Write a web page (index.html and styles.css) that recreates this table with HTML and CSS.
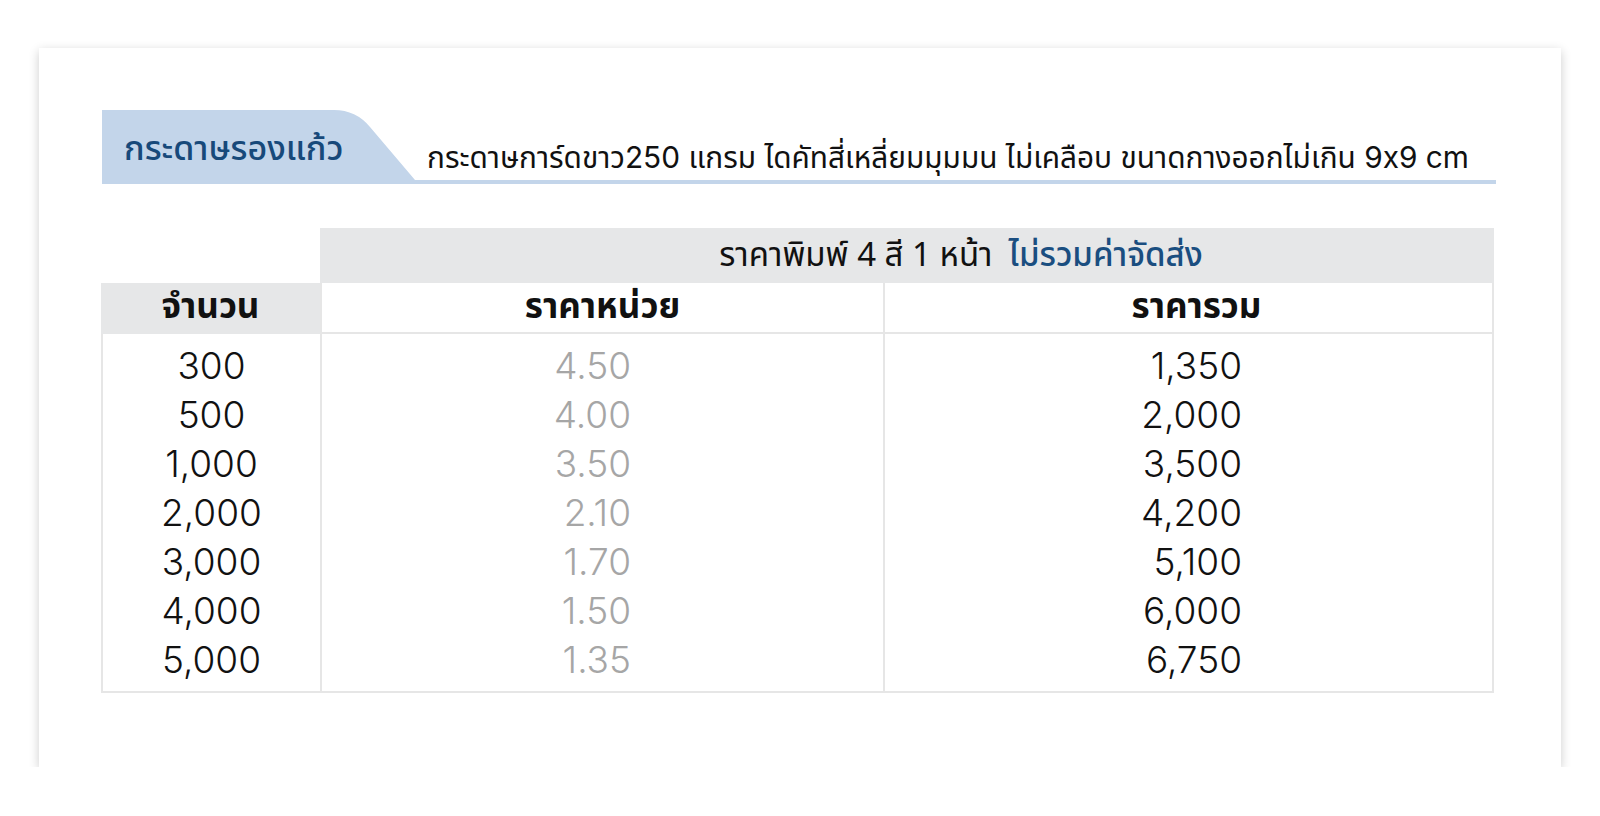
FILE: index.html
```html
<!DOCTYPE html>
<html lang="th">
<head>
<meta charset="utf-8">
<title>กระดาษรองแก้ว</title>
<link rel="stylesheet" href="styles.css">
</head>
<body>
<div class="card">
  <div class="heading">
    <div class="tab"><span class="tab-title">กระดาษรองแก้ว</span></div>
    <div class="desc">กระดาษการ์ดขาว250 แกรม ไดคัทสี่เหลี่ยมมุมมน ไม่เคลือบ ขนาดกางออกไม่เกิน 9x9 cm</div>
  </div>
  <div class="price-table">
    <div class="cell blank"></div>
    <div class="cell group">ราคาพิมพ์ 4 สี 1 หน้า <span class="note">ไม่รวมค่าจัดส่ง</span></div>
    <div class="cell head head-qty">จำนวน</div>
    <div class="cell head head-unit">ราคาหน่วย</div>
    <div class="cell head head-total">ราคารวม</div>
    <div class="col col-qty">
      <div class="v">300</div><div class="v">500</div><div class="v">1,000</div><div class="v">2,000</div><div class="v">3,000</div><div class="v">4,000</div><div class="v">5,000</div>
    </div>
    <div class="col col-unit">
      <div class="v">4.50</div><div class="v">4.00</div><div class="v">3.50</div><div class="v">2.10</div><div class="v">1.70</div><div class="v">1.50</div><div class="v">1.35</div>
    </div>
    <div class="col col-total">
      <div class="v">1,350</div><div class="v">2,000</div><div class="v">3,500</div><div class="v">4,200</div><div class="v">5,100</div><div class="v">6,000</div><div class="v">6,750</div>
    </div>
  </div>
</div>
</body>
</html>
```

FILE: styles.css
```css
html, body {
  margin: 0;
  padding: 0;
  background: #ffffff;
}
body {
  font-family: "Noto Sans Thai", "Noto Sans", "DejaVu Sans", sans-serif;
  color: #111111;
}
.card {
  margin: 48px 0 0 39px;
  width: 1522px;
  height: 719px;
  box-sizing: border-box;
  padding: 62px 65px 0 63px;
  background: #ffffff;
  box-shadow: 0 3px 10px rgba(0, 0, 0, 0.2);
}
.heading {
  display: flex;
  align-items: flex-end;
  border-bottom: 4px solid #c3d5ea;
  width: 1394px;
}
.tab {
  flex: 0 0 313px;
  height: 70px;
  background: #c3d5ea;
  clip-path: path('M0 0 H232 Q254 0 268 17 L313 70 H0 Z');
  display: flex;
  align-items: center;
  box-sizing: border-box;
  padding: 10px 0 0 22px;
}
.tab-title {
  font-size: 34px;
  color: #17497a;
  font-weight: 500;
  line-height: 1;
}
.desc {
  font-family: "Inter", "Noto Sans Thai", sans-serif;
  font-size: 29.8px;
  line-height: 1;
  padding: 0 0 7px 12px;
  white-space: nowrap;
}
.price-table {
  margin-top: 44px;
  margin-left: -1px;
  width: 1393px;
  display: grid;
  grid-template-columns: 219px 563px 611px;
}
.cell {
  display: flex;
  align-items: center;
  justify-content: center;
}
.group {
  grid-column: 2 / 4;
  height: 55px;
  background: #e6e7e8;
  font-size: 33px;
  padding-left: 108px;
}
.note {
  color: #1a4e80;
  margin-left: 16px;
  font-weight: 500;
}
.head {
  height: 49px;
  font-size: 35px;
  font-weight: 700;
  border-bottom: 2px solid #e6e6e6;
}
.head-qty {
  background: #e6e7e8;
  border-bottom-color: #e6e7e8;
}
.head-unit {
  border-left: 2px solid #e6e6e6;
}
.head-total {
  border-left: 2px solid #e6e6e6;
  border-right: 2px solid #e6e6e6;
  padding-left: 16px;
}
.col {
  padding: 7px 0;
  border-bottom: 2px solid #e6e6e6;
  font-family: "Inter", "Noto Sans", sans-serif;
  font-weight: 300;
  font-size: 37px;
}
.col-qty {
  border-left: 2px solid #e6e6e6;
  text-align: center;
}
.col-unit {
  border-left: 2px solid #e6e6e6;
  text-align: right;
  padding-right: 252px;
  color: #a6a6a6;
}
.col-total {
  border-left: 2px solid #e6e6e6;
  border-right: 2px solid #e6e6e6;
  text-align: right;
  padding-right: 250px;
}
.v {
  height: 49px;
  line-height: 49px;
}
```
